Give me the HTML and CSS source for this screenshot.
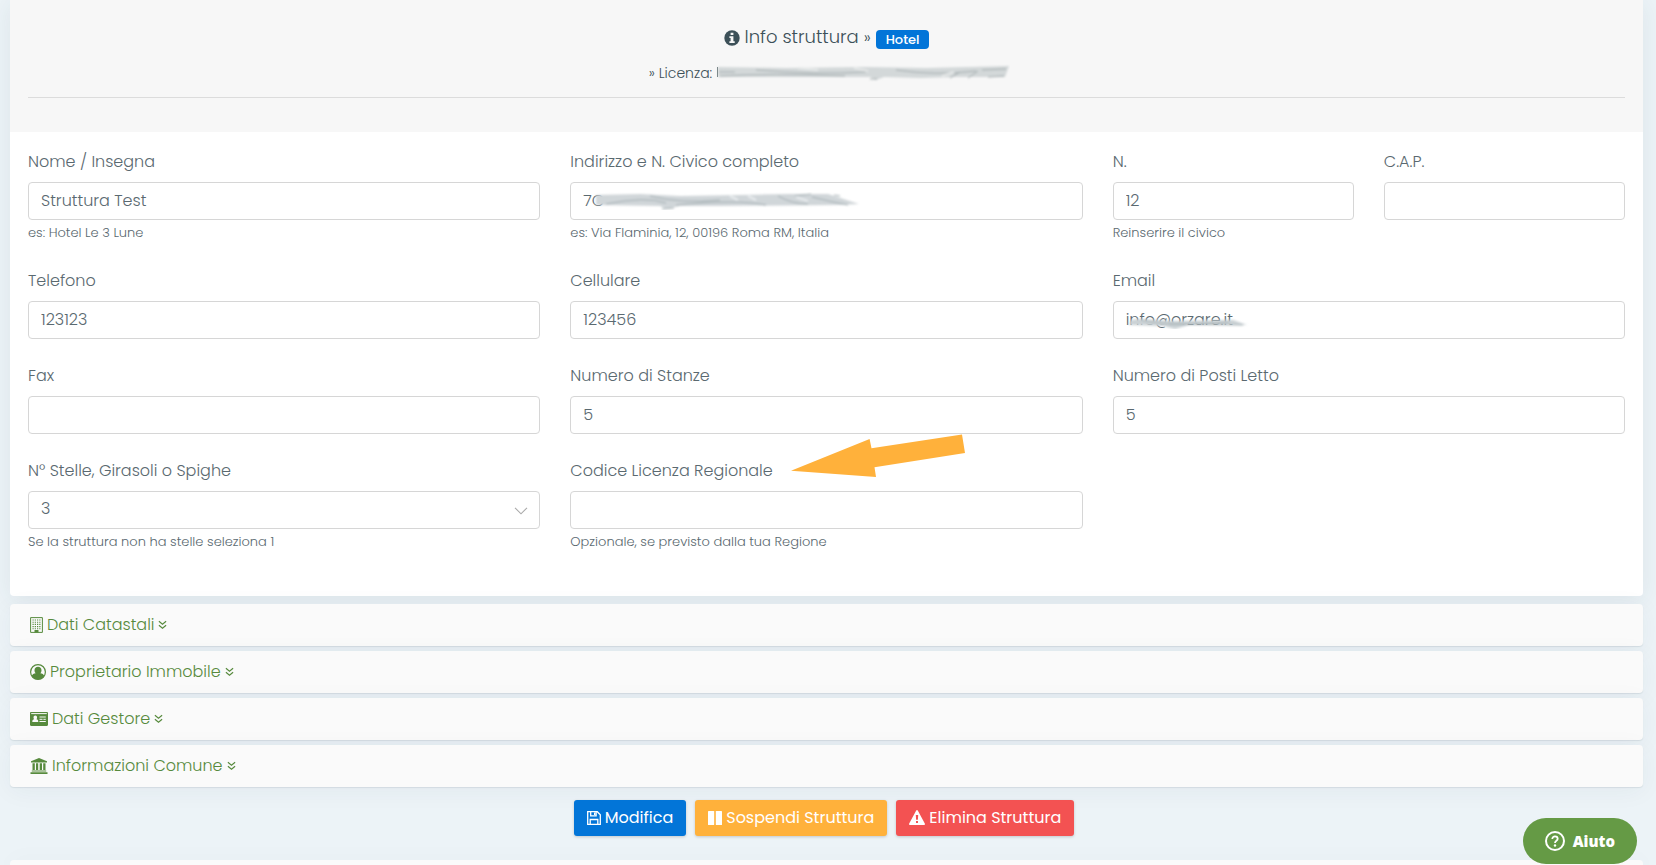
FILE: index.html
```html
<!DOCTYPE html>
<html lang="it">
<head>
<meta charset="utf-8">
<meta name="viewport" content="width=device-width, initial-scale=1">
<title>Info struttura</title>
<link rel="stylesheet" href="styles.css">
</head>
<body>
<svg class="defs" aria-hidden="true">
  <filter id="soft" x="-5%" y="-30%" width="110%" height="160%"><feGaussianBlur stdDeviation="0.8"/></filter>
  <symbol id="chevrons" viewBox="0 0 10 10"><path d="M1 .8l4 3.4 4-3.4M1 5.2l4 3.4 4-3.4" fill="none" stroke="currentColor" stroke-width="1.3"/></symbol>
</svg>
<main class="page">
  <form class="form">
    <section class="card">
      <header class="card-head">
        <h1 class="title">
          <svg class="icon" width="16" height="16" viewBox="0 0 16 16"><circle cx="8" cy="8" r="7.7" fill="currentColor"/><path d="M6.6 2.7h2.8v2.2H6.6zM5.4 6.3h4v5h1.3v1.8H5.4v-1.8h1.2V8.1H5.4z" fill="#f7f7f7"/></svg>
          <span>Info struttura <small>»</small></span>
          <span class="badge">Hotel</span>
        </h1>
        <p class="license">» Licenza:
          <svg width="294" height="18" viewBox="0 0 294 18" aria-hidden="true">
            <g filter="url(#soft)">
              <path d="M2 3L70 4 150 3 210 4 293 2 289 13 240 13 205 14 168 13 160 16 154 13 90 13 2 13z" fill="#d3d8d9"/>
              <path d="M3 8h16M40 6q60 5 110 2M4 12q50-3 125 0M180 6q40 6 80 1M234 14l10-6M252 14l10-7M266 6l24-1M272 13l16-1M154 15l7 0" fill="none" stroke="#a3acae"/>
              <path d="M82 4l20 2M138 4l14 3M226 12l12-4" stroke="#e6e9e9" stroke-width="2"/>
            </g>
            <path d="M1.500 3v10" stroke="#7d898b"/>
          </svg>
        </p>
        <hr class="rule">
      </header>
      <div class="fields">
        <div class="field">
          <label for="nome">Nome / Insegna</label>
          <input id="nome" type="text" value="Struttura Test">
          <small class="help">es: Hotel Le 3 Lune</small>
        </div>
        <div class="field">
          <label for="indirizzo">Indirizzo e N. Civico completo</label>
          <div class="control">
            <input id="indirizzo" type="text" value="7C">
            <svg class="smear smear-address" width="270" height="18" viewBox="0 0 270 18" aria-hidden="true">
              <g filter="url(#soft)">
                <path d="M6 3L50 2 90 4 150 3 200 2 238 2 269 12 250 13 130 14 90 14 76 17 70 14 6 13z" fill="#d0d6d9"/>
                <path d="M16 12q40-8 60-1M60 4q30 8 70 4M72 17l12-1M86 13q60-6 90 0M188 4q14 8 30 8M205 4l16-2M222 5q20 5 36 8M244 3l6 1" fill="none" stroke="#a2adb1"/>
                <path d="M140 4l8 4M158 4l8 4M206 5l12 4" stroke="#e8ecee" stroke-width="2"/>
              </g>
            </svg>
          </div>
          <small class="help">es: Via Flaminia, 12, 00196 Roma RM, Italia</small>
        </div>
        <div class="field half">
          <label for="numero">N.</label>
          <input id="numero" type="text" value="12">
          <small class="help">Reinserire il civico</small>
        </div>
        <div class="field half">
          <label for="cap">C.A.P.</label>
          <input id="cap" type="text">
        </div>
        <div class="field">
          <label for="telefono">Telefono</label>
          <input id="telefono" type="text" value="123123">
        </div>
        <div class="field">
          <label for="cellulare">Cellulare</label>
          <input id="cellulare" type="text" value="123456">
        </div>
        <div class="field">
          <label for="email">Email</label>
          <div class="control">
            <input id="email" type="text" value="info@orzare.it">
            <svg class="smear smear-email" width="124" height="18" viewBox="0 0 124 18" aria-hidden="true">
              <g filter="url(#soft)">
                <path d="M6 9L14 8 50 10 108 9 122 14 64 14 50 18 38 15 4 14z" fill="#cbd2d5"/>
                <path d="M16 9q30 7 88 2M44 13l74 1" fill="none" stroke="#a6b1b5"/>
              </g>
            </svg>
          </div>
        </div>
        <div class="field">
          <label for="fax">Fax</label>
          <input id="fax" type="text">
        </div>
        <div class="field">
          <label for="stanze">Numero di Stanze</label>
          <input id="stanze" type="text" value="5">
        </div>
        <div class="field">
          <label for="letti">Numero di Posti Letto</label>
          <input id="letti" type="text" value="5">
        </div>
        <div class="field">
          <label for="stelle">N° Stelle, Girasoli o Spighe</label>
          <div class="control">
            <select id="stelle"><option>1</option><option>2</option><option selected>3</option><option>4</option><option>5</option></select>
            <svg class="caret" width="14" height="8" viewBox="0 0 14 8" aria-hidden="true"><path d="M1 .8l6 6 6-6" fill="none" stroke="#aaa" stroke-width="1.1"/></svg>
          </div>
          <small class="help">Se la struttura non ha stelle seleziona 1</small>
        </div>
        <div class="field">
          <label for="codice">Codice Licenza Regionale</label>
          <input id="codice" type="text">
          <small class="help">Opzionale, se previsto dalla tua Regione</small>
          <svg class="arrow" width="176" height="44" viewBox="0 0 176 44" aria-hidden="true"><path d="M0 36.700L78.600 5l1.900 9.300L171 .6l3 18.400-90.500 14.300L85 43z" fill="#ffb13b"/></svg>
        </div>
      </div>
    </section>

    <div class="panels">
      <a class="panel" href="#catastali">
        <svg class="icon" width="13" height="16" viewBox="0 0 13 16"><path d="M.6.6h11.800v14.800H.6z" fill="none" stroke="currentColor"/><path d="M2.500 3h8M2.500 5.200h8M2.500 7.400h8M2.500 9.600h8M2.500 11.800h8" stroke="currentColor" stroke-width="1.100" stroke-dasharray="1.200 1.050"/><path d="M4.500 13h4v2.500h-4z" fill="currentColor"/></svg>
        <span>Dati Catastali</span>
        <svg class="chev"><use href="#chevrons"/></svg>
      </a>
      <a class="panel" href="#proprietario">
        <svg class="icon" width="16" height="16" viewBox="0 0 16 16"><circle cx="8" cy="8" r="7.400" fill="none" stroke="currentColor" stroke-width="1.200"/><path d="M8 2.800c2.100 0 3.500 1.500 3.500 3.500 0 1.300-.5 2.300-1.200 2.900 1.900.2 3.400 1.100 4.100 2.700A7.400 7.400 0 0 1 8 15.400a7.400 7.400 0 0 1-6.400-3.500c.7-1.600 2.200-2.500 4.100-2.700-.7-.6-1.200-1.600-1.200-2.900 0-2 1.400-3.500 3.500-3.500z" fill="currentColor"/></svg>
        <span>Proprietario Immobile</span>
        <svg class="chev"><use href="#chevrons"/></svg>
      </a>
      <a class="panel" href="#gestore">
        <svg class="icon" width="18" height="16" viewBox="0 0 18 16"><path d="M1.200 1h15.600c.7 0 1.200.5 1.200 1.200v11.600c0 .7-.5 1.200-1.200 1.200H1.200C.5 15 0 14.500 0 13.800V2.200C0 1.500.5 1 1.200 1z" fill="currentColor"/><path d="M1.200 2.600h15.600" stroke="#fafafa"/><path d="M5.300 4.600c1.100 0 1.800.8 1.800 1.900 0 .8-.3 1.400-.7 1.800 1.300.2 1.900 1 1.900 2.700H2.300c0-1.700.6-2.500 1.900-2.700-.4-.4-.7-1-.7-1.800 0-1.100.7-1.900 1.800-1.900z" fill="#fafafa"/><path d="M9.500 6h6.300M9.500 8.300h3M13.400 8.300h2.400M9.500 10.500h6.300" stroke="#fafafa"/></svg>
        <span>Dati Gestore</span>
        <svg class="chev"><use href="#chevrons"/></svg>
      </a>
      <a class="panel" href="#comune">
        <svg class="icon" width="18" height="16" viewBox="0 0 18 16"><path d="M9 0l8 3.200v1.300H1V3.200zM2.500 5.200h2.300V12H2.500zM6 5.200h2.200V12H6zM9.700 5.200H12V12H9.700zM13.200 5.200h2.300V12h-2.300zM1.800 12.400h14.400v1.200H1.800zM.5 14.300h17V16H.5z" fill="currentColor"/></svg>
        <span>Informazioni Comune</span>
        <svg class="chev"><use href="#chevrons"/></svg>
      </a>
    </div>

    <div class="actions">
      <button class="btn btn-blue" type="button">
        <svg width="14" height="14" viewBox="0 0 14 14"><path d="M.7.7h9.600l3 3v9.600H.7zM3.200 13V8.500h7.600V13M3.700.8v4h5.400v-4" fill="none" stroke="currentColor" stroke-width="1.300"/><path d="M7 1.500h1.500v2.500H7z" fill="currentColor"/></svg>
        Modifica</button>
      <button class="btn btn-amber" type="button">
        <svg width="14" height="14" viewBox="0 0 14 14"><rect width="6.200" height="14" rx=".6" fill="currentColor"/><rect x="7.800" width="6.200" height="14" rx=".6" fill="currentColor"/></svg>
        Sospendi Struttura</button>
      <button class="btn btn-red" type="button">
        <svg width="16" height="16" viewBox="0 0 16 16"><path d="M7.100.7c.4-.8 1.400-.8 1.800 0l6.900 12.700c.4.800 0 1.600-.9 1.600H1.100c-.9 0-1.300-.8-.9-1.600z" fill="currentColor"/><path d="M6.800 5h2.400L8.900 9.800H7.100zM7 10.900h2V13H7z" fill="#f35252"/></svg>
        Elimina Struttura</button>
    </div>
  </form>
  <section class="next-card"></section>
</main>
<button class="help-button" type="button">
  <svg width="20" height="20" viewBox="0 0 20 20"><circle cx="10" cy="10" r="9" fill="none" stroke="currentColor" stroke-width="2"/><path d="M7.300 7.900c0-1.500 1.200-2.600 2.700-2.600s2.700 1 2.700 2.500c0 2-2.700 2-2.700 4.200" fill="none" stroke="currentColor" stroke-width="1.800"/><circle cx="10" cy="14.500" r="1.200" fill="currentColor"/></svg>
  Aiuto
</button>
</body>
</html>
```
FILE: styles.css
```css
* { box-sizing: border-box; }

body {
  margin: 0;
  background: #ecf3f7;
  color: #5a6970;
  font: 300 16px/24px Poppins, Inter, "Open Sans", sans-serif;
}

.defs { position: absolute; width: 0; height: 0; }

.page {
  min-height: 100vh;
  padding: 0 13px 0 10px;
  overflow: hidden;
  display: flex;
  flex-direction: column;
}

.card {
  background: #fff;
  border-radius: 0 0 4px 4px;
  box-shadow: 0 4px 24px rgba(40, 60, 80, .08);
}

.card-head {
  background: #f7f7f7;
  padding: 24px 18px 34px;
  text-align: center;
  color: #3c5058;
}

.title {
  margin: 0;
  display: flex;
  justify-content: center;
  align-items: center;
  gap: 5px;
  font-size: 18px;
  line-height: 26px;
  font-weight: 300;
}

.title small { font-size: 16px; }

.badge {
  margin-top: 4px;
  background: #0275d8;
  color: #fff;
  border-radius: 4px;
  padding: 0 10px;
  font-size: 13px;
  line-height: 19px;
  font-weight: 500;
}

.license {
  margin: 11px 0 13px;
  padding-left: 6px;
  display: flex;
  justify-content: center;
  align-items: center;
  gap: 4px;
  font-size: 14px;
  line-height: 22px;
}

.rule { margin: 0; border: 0; border-top: 1px solid #dcdcdc; }

.fields {
  display: grid;
  grid-template-columns: repeat(6, 1fr);
  gap: 25px 30px;
  padding: 18px 18px 43px;
}

.field { grid-column: span 2; position: relative; }
.field.half { grid-column: span 1; }

label { display: block; margin-bottom: 8px; }

.control { position: relative; }

input,
select {
  display: block;
  width: 100%;
  height: 38px;
  padding: 0 12px 2px;
  border: 1px solid #d6d6d6;
  border-radius: 4px;
  background: #fff;
  color: #5a6970;
  font: inherit;
  appearance: none;
}

.help {
  display: block;
  padding: 3px 0 1px;
  font-size: 13px;
  line-height: 20px;
}

.caret { position: absolute; right: 12px; top: 16px; }
.smear { position: absolute; top: 10px; }
.smear-address { left: 20px; }
.smear-email { left: 12px; }
.arrow { position: absolute; left: 221px; top: -25px; }

.panels {
  display: grid;
  gap: 5px;
  margin-top: 8px;
}

.panel {
  display: flex;
  align-items: center;
  gap: 4px;
  padding: 9px 20px;
  background: #fafafa;
  border-radius: 4px;
  box-shadow: 0 1px 1px rgba(40, 60, 80, .1), 0 4px 24px rgba(40, 60, 80, .05);
  color: #578a3d;
  text-decoration: none;
}

.panel .icon { flex: none; }
.chev { width: 9px; height: 10px; }

.actions {
  display: flex;
  justify-content: center;
  gap: 9px;
  padding: 13px 5px 24px 0;
}

.btn {
  display: flex;
  align-items: center;
  gap: 4px;
  height: 36px;
  padding: 0 13px;
  border: 0;
  border-radius: 3px;
  color: #fff;
  font: inherit;
  font-weight: 400;
  box-shadow: 0 1px 3px rgba(0, 0, 0, .18);
}

.btn-blue { background: #0275d8; }
.btn-amber { background: #ffb13b; }
.btn-red { background: #f35252; }

.next-card {
  flex: 1;
  background: #fafafa;
  border-radius: 4px 4px 0 0;
  box-shadow: 0 4px 24px rgba(40, 60, 80, .08);
}

.help-button {
  position: fixed;
  right: 19px;
  bottom: 1px;
  display: flex;
  align-items: center;
  gap: 8px;
  height: 46px;
  padding: 0 22px;
  border: 0;
  border-radius: 23px;
  background: #659a45;
  color: #fff;
  font: 800 15px/24px "Open Sans", sans-serif;
}
```
